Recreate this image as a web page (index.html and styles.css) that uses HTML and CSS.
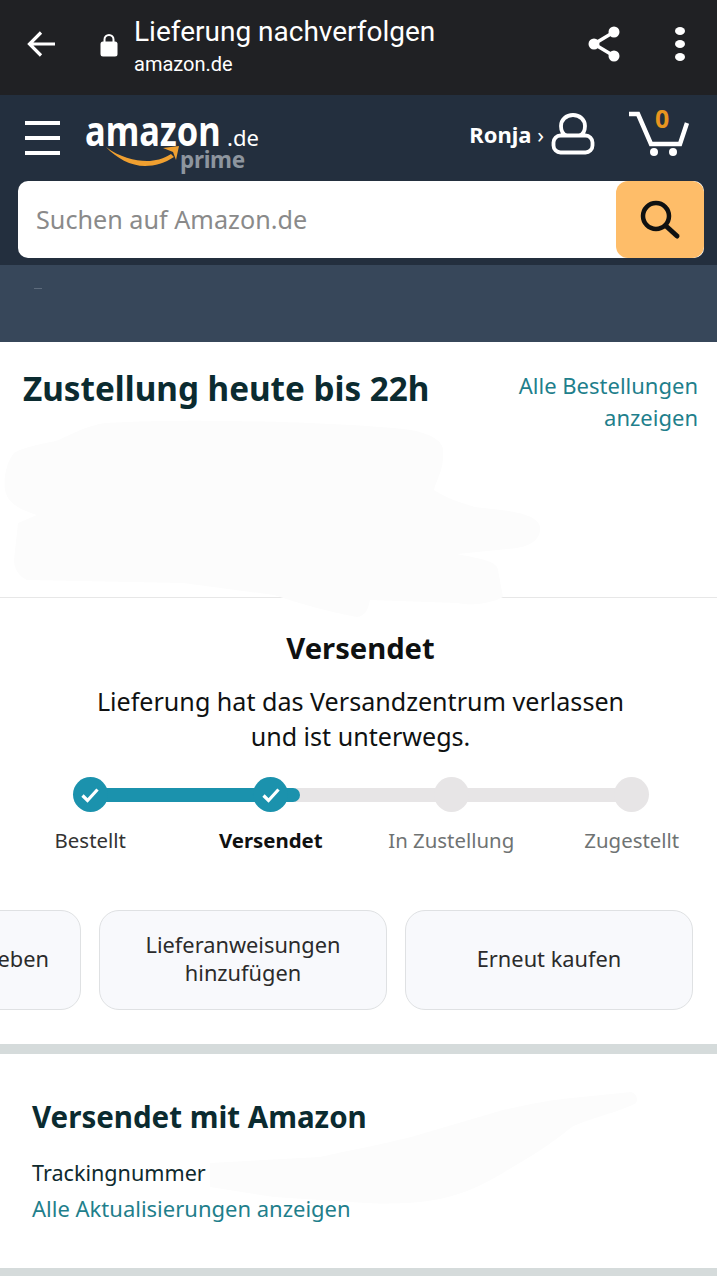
FILE: index.html
```html
<!DOCTYPE html>
<html lang="de">
<head>
  <meta charset="UTF-8">
  <title>Lieferung nachverfolgen</title>
  <link rel="stylesheet" href="styles.css">
</head>
<body>

<!-- Browser custom tab bar -->
<div class="tabbar">
  <svg class="back-icon" width="32" height="32" viewBox="0 0 32 32"><path d="M29 16H4M15 4.500 3.500 16 15 27.500" fill="none" stroke="#fff" stroke-width="3.200"/></svg>
  <svg class="lock-icon" width="18" height="24" viewBox="0 0 18 24"><path d="M4.500 10V6.500a4.500 4.500 0 0 1 9 0V10" fill="none" stroke="#fff" stroke-width="2"/><rect x="0.500" y="8.500" width="17" height="15" rx="2.500" fill="#fff"/></svg>
  <div class="tab-title">
    <div class="tab-name">Lieferung nachverfolgen</div>
    <div class="tab-host">amazon.de</div>
  </div>
  <svg class="share-icon" width="34" height="38" viewBox="0 0 34 38"><path d="M27 7 7 19l20 12" fill="none" stroke="#fff" stroke-width="3.500"/><circle cx="27" cy="7" r="5.500" fill="#fff"/><circle cx="7" cy="19" r="5.500" fill="#fff"/><circle cx="27" cy="31" r="5.500" fill="#fff"/></svg>
  <div class="dots"><span></span><span></span><span></span></div>
</div>

<!-- Amazon header -->
<div class="nav">
  <div class="nav-top">
    <div class="burger"><span></span><span></span><span></span></div>
    <div class="logo">
      <div class="logo-word"><span class="logo-name">amazon</span><span class="logo-tld">.de</span></div>
      <div class="logo-prime">prime</div>
      <svg class="logo-smile" width="75" height="22" viewBox="0 0 75 22"><path d="M1 2C14 12 30 16 42 16C50 16 58 14 66 9L69 12C60 18 50 21 40 21C26 21 11 13 1 2Z" fill="#f0a030"/><path d="M58 3 74 1 71 15 68 7z" fill="#f0a030"/></svg>
    </div>
    <div class="account">
      <span class="account-name">Ronja <span class="account-arrow">›</span></span>
      <svg width="44" height="42" viewBox="0 0 44 42"><path d="M22 2c-7 0-12 5-12 11s3 9 6 10h12c3-1 6-4 6-10S29 2 22 2z" fill="none" stroke="#fff" stroke-width="3.800"/><rect x="2.500" y="22.500" width="39" height="17" rx="7" fill="#232f3e" stroke="#fff" stroke-width="3.800"/></svg>
    </div>
    <div class="cart">
      <svg width="62" height="50" viewBox="0 0 62 50"><path d="M2 5h9l13 30h29l7-21" fill="none" stroke="#fff" stroke-width="4.500"/><circle cx="27" cy="43" r="4" fill="#fff"/><circle cx="46" cy="43" r="4" fill="#fff"/></svg>
      <span class="cart-count">0</span>
    </div>
  </div>
  <div class="search">
    <div class="search-input">Suchen auf Amazon.de</div>
    <div class="search-btn">
      <svg width="44" height="44" viewBox="0 0 44 44"><circle cx="18" cy="18" r="13" fill="none" stroke="#0f1111" stroke-width="4.500"/><path d="M28 28l11 10" stroke="#0f1111" stroke-width="5" stroke-linecap="round"/></svg>
    </div>
  </div>
</div>
<div class="subnav"><span class="subnav-mark"></span></div>

<!-- Delivery summary -->
<div class="summary">
  <h1>Zustellung heute bis 22h</h1>
  <a class="link orders-link">Alle Bestellungen anzeigen</a>
</div>

<div class="status">
  <h2>Versendet</h2>
  <p>Lieferung hat das Versandzentrum verlassen<br>und ist unterwegs.</p>

  <div class="stepper">
    <div class="track"><div class="track-fill"></div></div>
    <div class="step done">
      <div class="dot"><svg width="20" height="16" viewBox="0 0 20 16"><path d="M2.500 8.500 7.500 13.500 17.500 2.500" fill="none" stroke="#fff" stroke-width="3.200"/></svg></div>
      <span>Bestellt</span>
    </div>
    <div class="step done current">
      <div class="dot"><svg width="20" height="16" viewBox="0 0 20 16"><path d="M2.500 8.500 7.500 13.500 17.500 2.500" fill="none" stroke="#fff" stroke-width="3.200"/></svg></div>
      <span>Versendet</span>
    </div>
    <div class="step">
      <div class="dot"></div>
      <span>In Zustellung</span>
    </div>
    <div class="step">
      <div class="dot"></div>
      <span>Zugestellt</span>
    </div>
  </div>

  <div class="actions">
    <div class="action action-cut">Feedback abgeben</div>
    <div class="action">Lieferanweisungen<br>hinzufügen</div>
    <div class="action">Erneut kaufen</div>
  </div>
</div>

<div class="band"></div>

<div class="carrier">
  <h3>Versendet mit Amazon</h3>
  <div class="tracking">Trackingnummer</div>
  <a class="link">Alle Aktualisierungen anzeigen</a>
</div>

<div class="band band-last"></div>

<!-- Hand-painted redaction marks that sit on top of the page -->
<svg class="scribbles" width="717" height="1276" viewBox="0 0 717 1276">
  <path d="M105 423C200 418 340 422 411 430C432 434 445 442 443 453C444 470 436 480 434 490C450 500 462 503 475 507C500 510 538 512 540 527C541 540 530 546 517 548L457 554C475 558 497 560 498 570L503 597C490 604 470 606 457 603L370 600C368 610 365 616 357 617C330 612 300 604 274 595L183 583L27 580C18 576 14 568 14 560L18 523L37 515C22 510 8 505 5 490C3 475 8 460 14 453C28 445 45 444 59 440C75 432 90 425 105 423Z" fill="#fcfcfc"/>
  <path d="M631 1092C637 1094 638 1099 636 1103C620 1112 590 1118 572 1127C550 1145 525 1160 503 1173C480 1187 455 1197 434 1200C410 1204 390 1204 366 1203L274 1197L210 1187L210 1163L320 1157C350 1150 380 1145 411 1137L503 1110C530 1104 550 1100 572 1098Z" fill="#fcfcfc"/>
</svg>

</body>
</html>
```

FILE: styles.css
```css
* {
  box-sizing: border-box;
}
html, body {
  height: 1276px;
}
body {
  position: relative;
  margin: 0;
  overflow: hidden;
  background: #fff;
  color: #0f1111;
  font-family: "Noto Sans", Arial, sans-serif;
}

/* Custom tab bar */
.tabbar {
  display: flex;
  align-items: center;
  height: 95px;
  padding-bottom: 7px;
  background: #202124;
  color: #fff;
  font-family: Roboto, Arial, sans-serif;
}
.back-icon {
  margin-left: 26px;
}
.lock-icon {
  margin-left: 42px;
  margin-top: 2px;
}
.tab-title {
  flex: 1;
  margin-left: 16px;
  padding-top: 7px;
}
.tab-name {
  font-size: 28px;
  line-height: 36px;
  margin-top: -4px;
}
.tab-host {
  font-size: 20px;
  line-height: 28px;
}
.share-icon {
  margin-right: 54px;
}
.dots {
  display: flex;
  flex-direction: column;
  gap: 5px;
  margin-right: 32px;
}
.dots span {
  width: 10px;
  height: 8px;
  border-radius: 50%;
  background: #fff;
}

/* Amazon header */
.nav {
  height: 170px;
  padding: 0 13px 7px 18px;
  background: #232f3e;
}
.nav-top {
  display: flex;
  align-items: center;
  height: 86px;
}
.burger {
  display: flex;
  flex-direction: column;
  gap: 11px;
  width: 35px;
  margin-left: 7px;
}
.burger span {
  height: 4px;
  background: #fff;
}
.logo {
  position: relative;
  width: 176px;
  margin-left: 25px;
  margin-top: 6px;
  color: #fff;
}
.logo-word {
  display: flex;
  align-items: baseline;
  height: 38px;
  line-height: 38px;
}
.logo-name {
  flex: none;
  width: 142px;
  font-size: 42px;
  font-weight: 700;
  transform: scaleX(.82);
  transform-origin: left center;
}
.logo-tld {
  font-size: 22px;
}
.logo-prime {
  height: 22px;
  margin: 0 0 0 95px;
  font-size: 22.500px;
  line-height: 22px;
  font-weight: 700;
  color: #8d959e;
  letter-spacing: -.3px;
}
.logo-smile {
  position: absolute;
  left: 20px;
  top: 34px;
}
.account {
  display: flex;
  align-items: center;
  gap: 7px;
  margin-left: auto;
  margin-top: -8px;
}
.account-name {
  font-size: 22px;
  font-weight: 700;
  color: #fff;
}
.account-arrow {
  font-weight: 400;
}
.cart {
  position: relative;
  margin-left: 32px;
  margin-right: 15px;
  margin-top: -8px;
  width: 62px;
  height: 50px;
}
.cart-count {
  position: absolute;
  left: 28px;
  top: -9px;
  font-size: 25px;
  line-height: 36px;
  font-weight: 700;
  color: #e8951f;
}

/* Search box */
.search {
  display: flex;
  height: 77px;
  border-radius: 10px;
  overflow: hidden;
  background: #fff;
}
.search-input {
  flex: 1;
  padding-left: 18px;
  font-size: 25.200px;
  line-height: 77px;
  color: #8a8a8a;
}
.search-btn {
  display: flex;
  align-items: center;
  justify-content: center;
  width: 88px;
  border-radius: 12px;
  background: #febd69;
}
.subnav {
  height: 77px;
  padding: 23px 0 0 34px;
  background: #37475a;
}
.subnav-mark {
  display: block;
  width: 8px;
  height: 1px;
  background: #5d6b7c;
}

/* Delivery summary */
.summary {
  display: flex;
  justify-content: space-between;
  height: 256px;
  padding: 26px 19px 0 23px;
  border-bottom: 1px solid #e7e7e7;
}
h1 {
  margin: 0;
  font-size: 33.250px;
  line-height: 40px;
  font-weight: 700;
  color: #0b2b30;
}
.link {
  font-size: 22px;
  line-height: 32px;
  color: #1f7f8c;
}
.orders-link {
  width: 200px;
  margin-top: 1px;
  text-align: right;
}

/* Shipping status */
.status {
  height: 446px;
  padding-top: 28px;
  text-align: center;
  overflow: hidden;
}
h2 {
  margin: 0 0 14px;
  padding-left: 4px;
  font-size: 29.200px;
  line-height: 44px;
  font-weight: 700;
}
.status p {
  margin: 0;
  padding-left: 4px;
  font-size: 25.100px;
  line-height: 35px;
}
.stepper {
  position: relative;
  display: grid;
  grid-template-columns: repeat(4, 180.500px);
  margin-top: 23px;
}
.track {
  position: absolute;
  left: 90px;
  top: 11px;
  width: 541px;
  height: 14px;
  background: #e7e5e6;
}
.track-fill {
  width: 210px;
  height: 14px;
  border-radius: 0 7px 7px 0;
  background: #1b92ad;
}
.step {
  position: relative;
  display: flex;
  flex-direction: column;
  align-items: center;
  gap: 12px;
  font-size: 20.400px;
  line-height: 32px;
  color: #6f7373;
}
.dot {
  display: flex;
  align-items: center;
  justify-content: center;
  width: 35px;
  height: 35px;
  border-radius: 50%;
  background: #e7e5e6;
}
.step.done {
  color: #333;
}
.step.done .dot {
  background: #1b92ad;
}
.step.current {
  color: #0f1111;
  font-weight: 700;
}
.actions {
  display: flex;
  justify-content: flex-end;
  gap: 18px;
  margin-top: 54px;
  padding-right: 24px;
}
.action {
  display: flex;
  flex: none;
  align-items: center;
  justify-content: center;
  width: 288px;
  height: 100px;
  padding-bottom: 2px;
  border: 1px solid #dfe1e3;
  border-radius: 20px;
  background: #f8f9fc;
  font-size: 21.800px;
  line-height: 28px;
  color: #2b2b2b;
}
.action-cut {
  width: auto;
  padding: 0 31px 2px;
}

/* Carrier card */
.band {
  height: 10px;
  background: #d5dbdb;
}
.carrier {
  height: 214px;
  padding: 41px 32px 0;
}
h3 {
  margin: 0 0 16px;
  font-size: 29.500px;
  line-height: 44px;
  font-weight: 700;
  color: #0b2b30;
}
.tracking {
  font-size: 21.600px;
  line-height: 35px;
  color: #0f2a2e;
}
.carrier .link {
  display: block;
  line-height: 36px;
}

/* Redaction marks */
.scribbles {
  position: absolute;
  left: 0;
  top: 0;
  pointer-events: none;
}
```
